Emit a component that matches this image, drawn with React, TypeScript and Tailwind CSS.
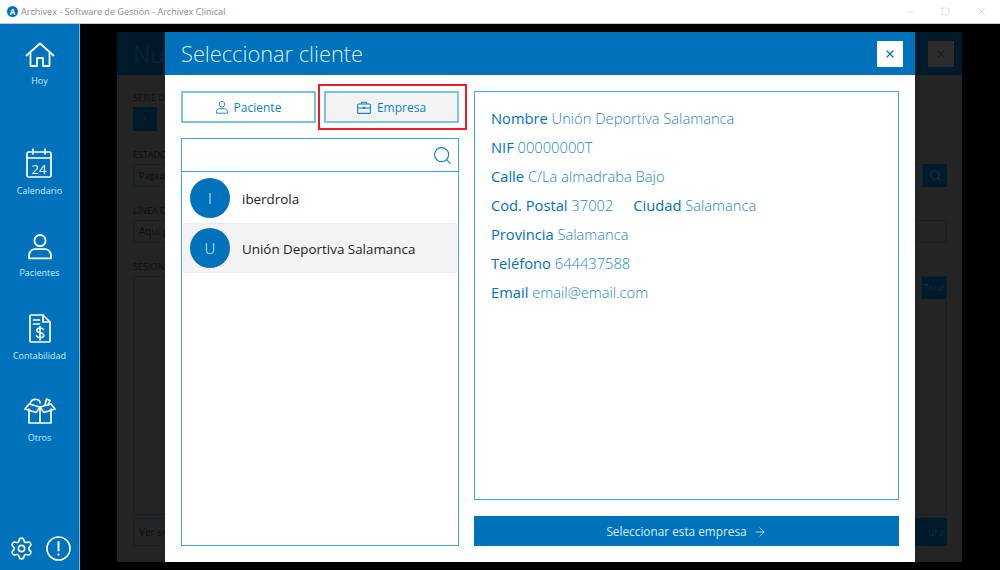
import React from 'react';
import { ReactNode } from 'react';
import { ArrowRight, Minus, Search, Settings, Square, X } from 'lucide-react';

const HomeIcon = () => (
  <svg width="30" height="26" viewBox="0 0 30 26" fill="none" stroke="currentColor" strokeWidth="1.8" strokeLinejoin="round" strokeLinecap="round">
    <path d="M1.5 13.5 15 1.5l13.5 12" />
    <path d="M5.5 11v13h6.5v-8h6v8h6.5V11" />
  </svg>
);

const CalendarIcon = () => (
  <svg width="26" height="30" viewBox="0 0 26 30" fill="none" stroke="currentColor" strokeWidth="1.7" strokeLinecap="round" strokeLinejoin="round">
    <rect x="1" y="4" width="24" height="25" rx="1.5" />
    <path d="M1 10h24M7 1v5M19 1v5" />
    <text x="13" y="25.5" textAnchor="middle" fontSize="13" fill="currentColor" stroke="none" fontFamily="Open Sans, sans-serif">24</text>
  </svg>
);

const PersonIcon = ({ size = 24 }: { size?: number }) => (
  <svg width={size} height={size * 1.08} viewBox="0 0 24 26" fill="none" stroke="currentColor" strokeWidth="1.8" strokeLinejoin="round">
    <circle cx="12" cy="6.6" r="5.6" />
    <path d="M1 24.5v-3c0-4 3-6.3 6-6.3h10c3 0 6 2.3 6 6.3v3z" />
  </svg>
);

const InvoiceIcon = () => (
  <svg width="22" height="29" viewBox="0 0 22 29" fill="none" stroke="currentColor" strokeWidth="1.7" strokeLinejoin="round" strokeLinecap="round">
    <path d="M2 1h12l7 7v19a1 1 0 0 1-1 1H2a1 1 0 0 1-1-1V2a1 1 0 0 1 1-1z" />
    <path d="M14 1v7h7M4.500 6h6M4.500 10h6" />
    <path d="M14.500 15.500c-.6-1-1.700-1.500-3.500-1.500-2 0-3.200 1-3.200 2.400 0 3.200 7 1.600 7 4.900 0 1.500-1.400 2.400-3.500 2.400-1.800 0-3.200-.6-3.800-1.800M11 12.500v13.500" strokeWidth="1.6" />
  </svg>
);

const BoxIcon = () => (
  <svg width="32" height="27" viewBox="0 0 32 27" fill="none" stroke="currentColor" strokeWidth="1.7" strokeLinejoin="round" strokeLinecap="round">
    <path d="M5 11v14h22V11M16 9v16" />
    <path d="M16 9 5 6 1 11l11 3.500zM16 9l11-3 4 5-11 3.500z" />
    <path d="M6 6c1-3.500 4-5 7-4.500 2 .3 3 1.500 3 3.500" />
    <path d="M21 7l1.500-6 3.500 1.500-2 4.500" />
  </svg>
);

const AlertIcon = () => (
  <svg width="25" height="25" viewBox="0 0 25 25" fill="none" stroke="currentColor" strokeWidth="1.7" strokeLinecap="round">
    <circle cx="12.500" cy="12.500" r="11.500" />
    <path d="M12.500 6v8.500" strokeWidth="2" />
    <path d="M12.500 18.500v.2" strokeWidth="2.200" />
  </svg>
);

const BriefcaseIcon = () => (
  <svg width="14" height="13" viewBox="0 0 14 13" fill="none" stroke="currentColor" strokeWidth="1.1" strokeLinejoin="round">
    <rect x="0.600" y="3" width="12.800" height="9.400" rx="1" />
    <path d="M4.500 3V1.200h5V3M0.600 7h12.800" />
    <rect x="5.800" y="5.900" width="2.400" height="2" fill="currentColor" stroke="none" />
  </svg>
);

function NavItem({ icon, label, className }: { icon: ReactNode; label: string; className: string }) {
  return (
    <div className={`flex flex-col items-center ${className}`}>
      <div className="flex h-[30px] items-end justify-center text-white">{icon}</div>
      <span className="mt-[6px] text-[9px] leading-[14px] text-[#c5ecfb]">{label}</span>
    </div>
  );
}

function DimLabel({ children, className = '' }: { children: ReactNode; className?: string }) {
  return <p className={`text-[9px] leading-3 text-[#0f0f0f] ${className}`}>{children}</p>;
}

function Detail({ label, value }: { label: string; value: string }) {
  return (
    <span>
      <span className="font-medium text-[#0072bc]">{label}</span>{' '}
      <span className="font-light text-[#1a88c4]">{value}</span>
    </span>
  );
}

function ClientRow({ letter, name, active }: { letter: string; name: string; active?: boolean }) {
  return (
    <div className={`flex h-[50px] items-center gap-3 pl-[7px] ${active ? 'border-y border-[#ececec] bg-[#f3f3f3]' : ''}`}>
      <div className="flex h-10 w-10 items-center justify-center rounded-full bg-[#0072bc] text-[15px] font-light text-[#e3f5fc]">
        {letter}
      </div>
      <span className="pt-[2px] text-[13.400px] text-[#222222]">{name}</span>
    </div>
  );
}

export default function App() {
  return (
    <div className="flex h-[570px] w-[1000px] flex-col overflow-hidden bg-black font-['Open_Sans',sans-serif]">
      <header className="flex h-6 shrink-0 items-center border-b border-[#c8c8c8] bg-white pl-[7px]">
        <div className="flex h-[11px] w-[11px] items-center justify-center rounded-full bg-[#0072bc] text-[8px] font-bold leading-none text-white">A</div>
        <span className="ml-[3px] text-[9.050px] text-[#8d8d8d]">Archivex - Software de Gestión - Archivex Clinical</span>
        <div className="ml-auto flex items-center gap-[26px] pr-[13px] text-[#b5b5b5]">
          <Minus size={10} strokeWidth={1} />
          <Square size={9} strokeWidth={1} />
          <X size={11} strokeWidth={1} />
        </div>
      </header>

      <div className="flex min-h-0 flex-1">
        <aside className="flex w-20 shrink-0 flex-col items-center border-r border-[#5cc0e6] bg-[#0072bc]">
          <NavItem icon={<HomeIcon />} label="Hoy" className="mt-[14px]" />
          <NavItem icon={<CalendarIcon />} label="Calendario" className="mt-[60px]" />
          <NavItem icon={<PersonIcon size={24} />} label="Pacientes" className="mt-[32px]" />
          <NavItem icon={<InvoiceIcon />} label="Contabilidad" className="mt-[33px]" />
          <NavItem icon={<BoxIcon />} label="Otros" className="mt-[32px]" />
          <div className="mt-auto mb-[9px] flex items-center gap-[12px] text-white">
            <Settings size={25} strokeWidth={1.500} />
            <AlertIcon />
          </div>
        </aside>

        <main className="relative min-w-0 flex-1 pt-2 pr-[38px] pb-2 pl-[37px]">
          {/* dimmed invoice window behind the dialog */}
          <div className="flex h-full flex-col bg-[#242424]">
            <div className="flex h-[43px] shrink-0 items-center justify-between bg-[#001a2c] pr-[8px] pl-[16px]">
              <span className="text-[24px] font-light text-[#14222c]">Nu</span>
              <div className="flex h-[26px] w-[26px] items-center justify-center bg-[#2c2c2c] text-[#0a2233]">
                <X size={12} strokeWidth={2.500} />
              </div>
            </div>
            <div className="flex min-h-0 flex-1 flex-col pt-[17px] pr-[15px] pb-4 pl-4">
              <DimLabel>SERIE DE</DimLabel>
              <div className="mt-[3px] flex h-6 w-6 items-center justify-center bg-[#001a2c] text-[8px] text-[#12293a]">F</div>
              <DimLabel className="mt-[18px]">ESTADO</DimLabel>
              <div className="mt-[3px] flex h-[23px]">
                <div className="flex flex-1 items-center border border-[#10212c] pl-[5px] text-[9px] text-[#0c0c0c]">Pagada</div>
                <div className="flex w-[24px] items-center justify-center bg-[#001a2c] text-[#1d3a4f]">
                  <Search size={13} strokeWidth={1.500} />
                </div>
              </div>
              <DimLabel className="mt-[18px]">LÍNEA DE</DimLabel>
              <div className="mt-[3px] flex h-[23px] items-center border border-[#10212c] pl-[5px] text-[10px] text-[#0c0c0c]">Aquí puedes</div>
              <DimLabel className="mt-[18px]">SESIONES</DimLabel>
              <div className="relative mt-[3px] flex-1 border border-[#10212c]">
                <div className="absolute top-0 right-0 flex h-[22px] w-[24px] items-center justify-center bg-[#001a2c] text-[9px] text-[#14293a]">Total</div>
              </div>
              <div className="mt-[3px] flex h-[28px] gap-4">
                <div className="flex flex-1 items-center border border-[#10212c] pl-[5px] text-[10px] text-[#0c0c0c]">Ver sesiones</div>
                <div className="flex w-[32px] items-center justify-end bg-[#001a2c] pr-[3px] text-[10px] text-[#14293a]">ura</div>
              </div>
            </div>
          </div>

          {/* select client dialog */}
          <div className="absolute top-2 bottom-2 left-[85px] flex w-[750px] flex-col bg-white">
            <div className="flex h-[43px] shrink-0 items-center justify-between bg-[#0072bc] pr-3 pl-4">
              <h1 className="pt-[1px] text-[21.800px] font-light text-[#d8f1fb]">Seleccionar cliente</h1>
              <button className="flex h-[26px] w-[26px] items-center justify-center bg-white text-[#0072bc]">
                <X size={12} strokeWidth={2.500} />
              </button>
            </div>
            <div className="flex min-h-0 flex-1 gap-[15px] px-4 pt-4 pb-4">
              <div className="flex w-[278px] shrink-0 flex-col gap-[15px]">
                <div className="relative flex gap-2">
                  <button className="flex h-8 flex-1 items-center justify-center gap-[6px] border-2 border-[#7cc3de] pt-[1px] text-[12px] font-medium text-[#0f82c4]">
                    <PersonIcon size={12} />
                    Paciente
                  </button>
                  <button className="flex h-8 flex-1 items-center justify-center gap-[6px] border-2 border-[#7cc3de] bg-[#f3f3f3] pt-[1px] text-[12px] font-medium text-[#0f82c4]">
                    <BriefcaseIcon />
                    Empresa
                  </button>
                  <div className="absolute top-[-7px] right-[-8px] h-[46px] w-[149px] border-2 border-[#ee1c25]" />
                </div>
                <div className="flex min-h-0 flex-1 flex-col border border-[#3fa9d6]">
                  <div className="flex h-[33px] shrink-0 items-center justify-end border-b border-[#3fa9d6] pr-[5px] text-[#0f82c4]">
                    <Search size={21} strokeWidth={1.300} />
                  </div>
                  <div className="px-[1px] pt-[1px]">
                    <ClientRow letter="I" name="iberdrola" />
                    <ClientRow letter="U" name="Unión Deportiva Salamanca" active />
                  </div>
                </div>
              </div>

              <div className="flex min-w-0 flex-1 flex-col gap-4">
                <div className="flex-1 space-y-[7px] border border-[#3fa9d6] px-4 pt-[15px] text-[14.700px] leading-[22px]">
                  <p><Detail label="Nombre" value="Unión Deportiva Salamanca" /></p>
                  <p><Detail label="NIF" value="00000000T" /></p>
                  <p><Detail label="Calle" value="C/La almadraba Bajo" /></p>
                  <p className="flex gap-5">
                    <Detail label="Cod. Postal" value="37002" />
                    <Detail label="Ciudad" value="Salamanca" />
                  </p>
                  <p><Detail label="Provincia" value="Salamanca" /></p>
                  <p><Detail label="Teléfono" value="644437588" /></p>
                  <p><Detail label="Email" value="email@email.com" /></p>
                </div>
                <button className="flex h-[30px] shrink-0 items-center justify-center gap-[6px] bg-[#0072bc] pt-[1px] text-[11.800px] text-[#d5effa]">
                  Seleccionar esta empresa
                  <ArrowRight size={14} strokeWidth={1.300} />
                </button>
              </div>
            </div>
          </div>
        </main>
      </div>
    </div>
  );
}
